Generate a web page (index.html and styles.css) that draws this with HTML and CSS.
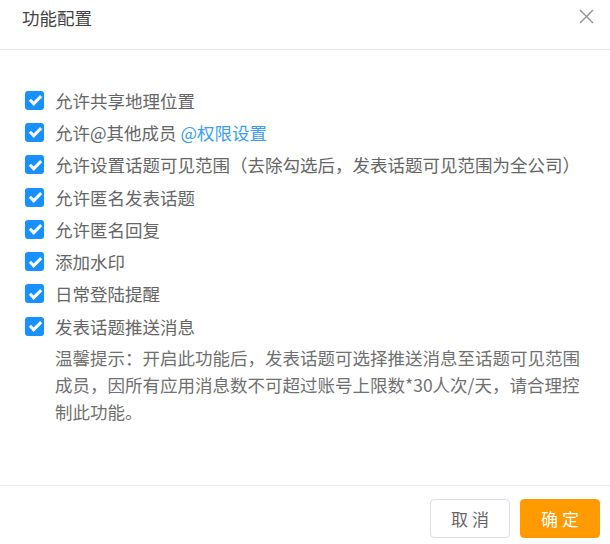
FILE: index.html
```html
<!DOCTYPE html>
<html lang="zh-CN">
<head>
  <meta charset="UTF-8">
  <title>功能配置</title>
  <link rel="stylesheet" href="styles.css">
</head>
<body>

  <div class="dialog">
    <div class="dialog-header">
      <span class="dialog-title">功能配置</span>
      <span class="dialog-close">
        <svg width="15" height="15" viewBox="0 0 15 15"><path d="M1 1L14 14M14 1L1 14" stroke="#999" stroke-width="1.5" fill="none"/></svg>
      </span>
    </div>

    <div class="dialog-body">
      <label class="option"><span class="check"></span>允许共享地理位置</label>
      <label class="option"><span class="check"></span>允许@其他成员&nbsp;<a class="link">@权限设置</a></label>
      <label class="option"><span class="check"></span>允许设置话题可见范围（去除勾选后，发表话题可见范围为全公司）</label>
      <label class="option"><span class="check"></span>允许匿名发表话题</label>
      <label class="option"><span class="check"></span>允许匿名回复</label>
      <label class="option"><span class="check"></span>添加水印</label>
      <label class="option"><span class="check"></span>日常登陆提醒</label>
      <label class="option"><span class="check"></span>发表话题推送消息</label>
      <div class="tip">温馨提示：开启此功能后，发表话题可选择推送消息至话题可见范围成员，因所有应用消息数不可超过账号上限数*30人次/天，请合理控制此功能。</div>
    </div>

    <div class="dialog-footer">
      <button class="btn">取 消</button>
      <button class="btn btn-primary">确 定</button>
    </div>
  </div>

</body>
</html>
```

FILE: styles.css
```css
body {
  margin: 0;
  background: #fff;
  font-family: "Noto Sans CJK SC", "Liberation Sans", sans-serif;
}
.dialog {
  width: 610px;
  height: 544px;
  background: #fff;
}
.dialog-header {
  height: 49px;
  border-bottom: 1px solid #e8e8e8;
  display: flex;
  justify-content: space-between;
  padding: 0 16px 0 22px;
}
.dialog-title {
  font-size: 17.5px;
  line-height: 36px;
  color: #444;
}
.dialog-close {
  height: 33px;
  display: flex;
  align-items: center;
}
.dialog-body {
  height: 435px;
  box-sizing: border-box;
  padding: 34px 25px 0 25px;
}
.option {
  display: flex;
  align-items: center;
  height: 32.3px;
  font-size: 17.5px;
  color: #666;
}
.check {
  width: 19px;
  height: 19px;
  border-radius: 3px;
  background: #1890ff;
  margin: 0 11px 0 0;
  position: relative;
}
.check::after {
  content: "";
  position: absolute;
  left: 6.5px;
  top: 2.5px;
  width: 4px;
  height: 9px;
  border: solid #fff;
  border-width: 0 3px 3px 0;
  transform: rotate(45deg);
}
.link {
  color: #3a9ff5;
}
.tip {
  width: 530px;
  margin: 2px 0 0 30px;
  font-size: 17.5px;
  line-height: 27px;
  color: #707070;
}
.dialog-footer {
  border-top: 1px solid #e8e8e8;
  display: flex;
  justify-content: flex-end;
  gap: 10px;
  padding: 13px 10px 0 0;
}
.btn {
  width: 80px;
  height: 39px;
  font-family: inherit;
  font-size: 17px;
  color: #666;
  background: #fff;
  border: 1px solid #dcdfe6;
  border-radius: 4px;
}
.btn-primary {
  color: #fff;
  background: #ff9a00;
  border-color: #ff9a00;
}
```
